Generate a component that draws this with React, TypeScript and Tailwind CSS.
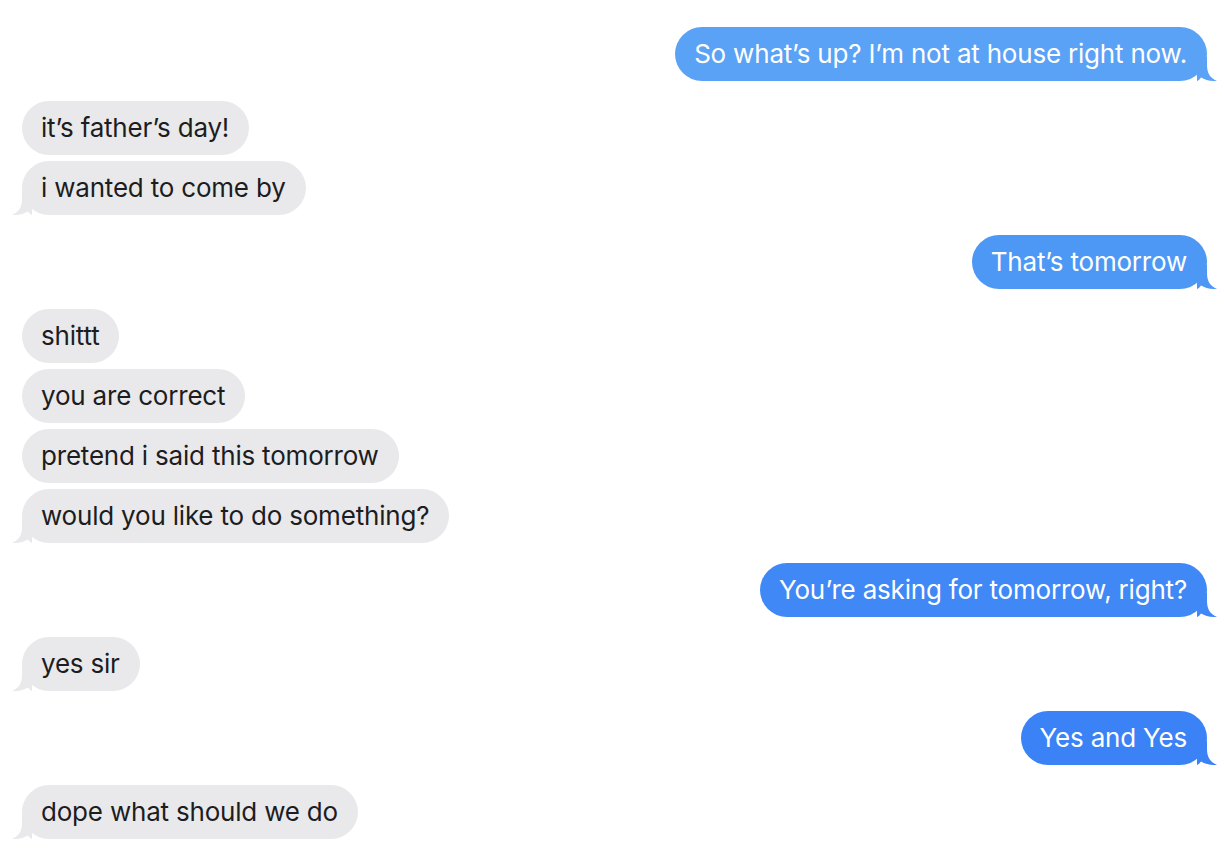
import React from "react";

type Msg = { text: string; me: boolean; tail: boolean; mt: string; color?: string };

const msgs: Msg[] = [
  { text: "So what\u2019s up? I\u2019m not at house right now.", me: true, tail: true, mt: "mt-0", color: "#5aa2f6" },
  { text: "it\u2019s father\u2019s day!", me: false, tail: false, mt: "mt-[20px]" },
  { text: "i wanted to come by", me: false, tail: true, mt: "mt-[6px]" },
  { text: "That\u2019s tomorrow", me: true, tail: true, mt: "mt-[20px]", color: "#4d98f5" },
  { text: "shittt", me: false, tail: false, mt: "mt-[20px]" },
  { text: "you are correct", me: false, tail: false, mt: "mt-[6px]" },
  { text: "pretend i said this tomorrow", me: false, tail: false, mt: "mt-[6px]" },
  { text: "would you like to do something?", me: false, tail: true, mt: "mt-[6px]" },
  { text: "You\u2019re asking for tomorrow, right?", me: true, tail: true, mt: "mt-[20px]", color: "#3f88f5" },
  { text: "yes sir", me: false, tail: true, mt: "mt-[20px]" },
  { text: "Yes and Yes", me: true, tail: true, mt: "mt-[20px]", color: "#3a82f5" },
  { text: "dope what should we do", me: false, tail: true, mt: "mt-[20px]" },
];

function Tail({ me, color }: { me: boolean; color: string }) {
  return (
    <svg
      width="20"
      height="24"
      viewBox="0 0 20 24"
      className={me ? "absolute right-[-10px] bottom-0" : "absolute left-[-10px] bottom-0 -scale-x-100"}
    >
      <path d="M0 0 H10 V8 C10 16 13 21 20 24 C14 24.3 8 23 4 20.5 C3 22 1.5 23.5 0 24 Z" fill={color} />
    </svg>
  );
}

export default function App() {
  return (
    <div
      className="w-[1224px] h-[854px] bg-white overflow-hidden flex flex-col pt-[27px] pl-[22px] pr-[17px]"
      style={{ fontFamily: "Inter, 'Noto Sans', sans-serif" }}
    >
      {msgs.map((m, i) => {
        const bg = m.me ? m.color! : "#e9e9eb";
        return (
          <div key={i} className={`flex ${m.me ? "justify-end" : "justify-start"} ${m.mt}`}>
            <div
              className={`relative h-[54px] rounded-[27px] pl-[19px] pr-[20px] flex items-center text-[26px] leading-none tracking-[-0.2px] ${
                m.me ? "text-white" : "text-[#1d1d1f]"
              }`}
              style={{ backgroundColor: bg }}
            >
              <span className="relative z-10 whitespace-nowrap">{m.text}</span>
              {m.tail && <Tail me={m.me} color={bg} />}
            </div>
          </div>
        );
      })}
    </div>
  );
}
